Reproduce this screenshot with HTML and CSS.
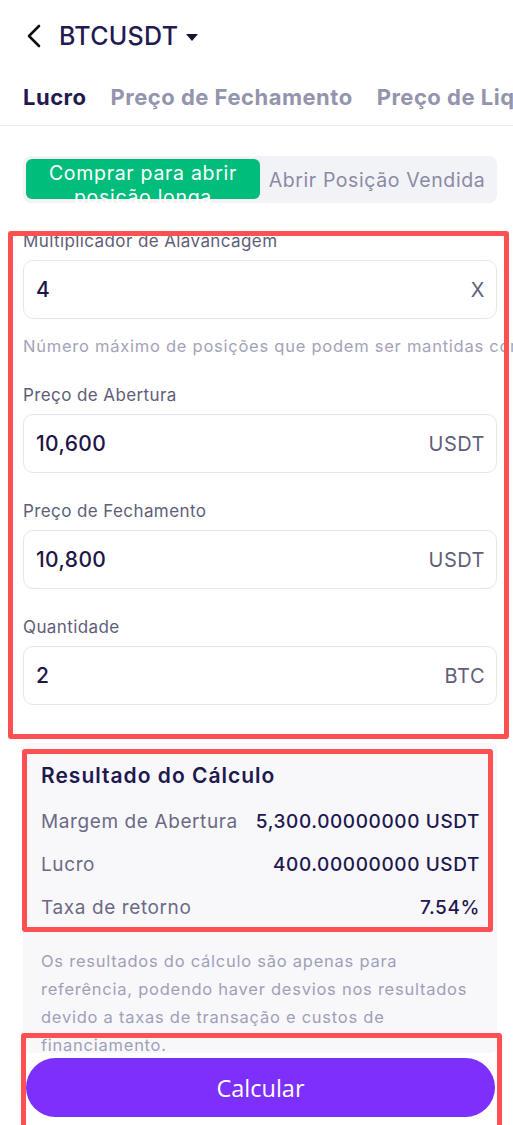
FILE: index.html
```html
<!DOCTYPE html>
<html lang="pt">
<head>
  <meta charset="UTF-8" />
  <meta name="viewport" content="width=device-width, initial-scale=1.0"/>
  <title>Calculadora BTCUSDT</title>
  <link rel="stylesheet" href="styles.css">
</head>
<body>

  <header class="top-bar">
    <svg class="back" width="18" height="24" viewBox="0 0 18 24">
      <polyline points="14,2 4,12 14,22" fill="none" stroke="#111" stroke-width="2.6" stroke-linecap="round" stroke-linejoin="round"/>
    </svg>
    <span class="pair">BTCUSDT</span>
    <svg class="caret" width="12" height="7" viewBox="0 0 12 7">
      <polygon points="0,0 12,0 6,7" fill="#1a1433"/>
    </svg>
  </header>

  <nav class="tabs">
    <span class="tab active">Lucro</span>
    <span class="tab">Preço de Fechamento</span>
    <span class="tab">Preço de Liquidação</span>
  </nav>

  <main class="content">
    <div class="side-toggle">
      <div class="side long">Comprar para abrir posição longa</div>
      <div class="side short">Abrir Posição Vendida</div>
    </div>

    <label class="field-label">Multiplicador de Alavancagem</label>
    <div class="field">
      <span class="value">4</span>
      <span class="unit">X</span>
    </div>
    <p class="hint">Número máximo de posições que podem ser mantidas com a alavancagem atual</p>

    <label class="field-label">Preço de Abertura</label>
    <div class="field">
      <span class="value">10,600</span>
      <span class="unit">USDT</span>
    </div>

    <label class="field-label">Preço de Fechamento</label>
    <div class="field">
      <span class="value">10,800</span>
      <span class="unit">USDT</span>
    </div>

    <label class="field-label">Quantidade</label>
    <div class="field">
      <span class="value">2</span>
      <span class="unit">BTC</span>
    </div>

    <section class="result">
      <h2>Resultado do Cálculo</h2>
      <div class="row"><span>Margem de Abertura</span><strong>5,300.00000000 USDT</strong></div>
      <div class="row"><span>Lucro</span><strong>400.00000000 USDT</strong></div>
      <div class="row"><span>Taxa de retorno</span><strong>7.54%</strong></div>
      <p class="note">Os resultados do cálculo são apenas para referência, podendo haver desvios nos resultados devido a taxas de transação e custos de financiamento.</p>
    </section>

    <button class="calc">Calcular</button>
  </main>

  <div class="mark mark-form"></div>
  <div class="mark mark-result"></div>
  <div class="mark mark-button"></div>

</body>
</html>
```

FILE: styles.css
```css
body {
  margin: 0;
  width: 513px;
  height: 1125px;
  overflow: hidden;
  background: #fff;
  font-family: Inter, 'Noto Sans', sans-serif;
  color: #1e1646;
  position: relative;
}
.top-bar {
  display: flex;
  align-items: center;
  height: 48px;
  padding: 12px 0 0 25px;
}
.back {
  margin-right: 16px;
}
.pair {
  font-size: 25px;
  font-weight: 500;
  color: #231a52;
  letter-spacing: 0.3px;
}
.caret {
  margin-left: 8px;
  margin-top: 2px;
}
.tabs {
  display: flex;
  gap: 24px;
  padding: 0 0 0 23px;
  height: 65px;
  align-items: center;
  white-space: nowrap;
  overflow: hidden;
  border-bottom: 1px solid #ececf1;
  position: relative;
}
.tab {
  font-size: 22px;
  font-weight: 700;
  letter-spacing: 0.5px;
  color: #9394ad;
  position: relative;
  padding-top: 8px;
}
.tab.active {
  color: #23194f;
}
.tab.active::after {
  content: "";
  position: absolute;
  left: 17px;
  width: 29px;
  height: 3px;
  bottom: -20px;
  background: #2a1f5c;
}
.content {
  padding: 0 16px 0 23px;
}
.side-toggle {
  margin-top: 30px;
  display: grid;
  grid-template-columns: 1fr 1fr;
  height: 47px;
  padding: 3px;
  box-sizing: border-box;
  background: #f2f3f7;
  border-radius: 8px;
  overflow: hidden;
}
.side {
  min-width: 0;
  text-align: center;
  font-size: 19.5px;
  letter-spacing: 0.7px;
  line-height: 24px;
}
.long {
  background: #00bd7b;
  color: #fff;
  border-radius: 6px;
  height: 40px;
  padding: 2px 20px 0;
  box-sizing: border-box;
}
.short {
  color: #8a8aa5;
  padding-top: 9px;
  white-space: nowrap;
  letter-spacing: 0.6px;
}
.field-label {
  display: block;
  font-size: 17px;
  letter-spacing: 0.4px;
  line-height: 22px;
  color: #5e5e7a;
  margin: 27px 0 8px;
}
.field {
  display: flex;
  align-items: center;
  justify-content: space-between;
  height: 59px;
  box-sizing: border-box;
  padding: 0 11px 0 12px;
  border: 1px solid #e6e6ee;
  border-radius: 10px;
}
.value {
  font-size: 21px;
  font-weight: 500;
  letter-spacing: 0.4px;
  color: #1e1646;
}
.unit {
  font-size: 20px;
  letter-spacing: 0.5px;
  color: #5f5f7a;
}
.hint {
  margin: 16px -16px 0 0;
  font-size: 16.5px;
  letter-spacing: 0.75px;
  line-height: 22px;
  color: #a3a3b8;
  white-space: nowrap;
  overflow: hidden;
}
.result {
  margin-top: 38px;
  height: 310px;
  overflow: hidden;
  background: #f8f8fb;
  border-radius: 6px;
  padding: 19px 17px 0 18px;
  box-sizing: border-box;
}
.result h2 {
  margin: 0 0 19px;
  font-size: 21px;
  letter-spacing: 1px;
  line-height: 28px;
  font-weight: 600;
  color: #211850;
}
.row {
  display: flex;
  justify-content: space-between;
  font-size: 19px;
  letter-spacing: 0.6px;
  line-height: 26px;
  margin-bottom: 17px;
}
.row span {
  color: #6b6b85;
}
.row strong {
  font-weight: 500;
  color: #211850;
}
.note {
  margin: 26px 0 0;
  font-size: 16.5px;
  letter-spacing: 0.75px;
  line-height: 28px;
  color: #a0a0b8;
}
.calc {
  display: block;
  margin: 5px 0 0 3px;
  width: 469px;
  height: 59px;
  border: none;
  border-radius: 30px;
  background: #7d2ffb;
  color: #fff;
  font-family: 'Open Sans', sans-serif;
  font-size: 23.5px;
}
.mark {
  position: absolute;
  border: 5px solid #fc5052;
  border-radius: 3px;
  box-sizing: border-box;
}
.mark-form {
  left: 8px;
  top: 231px;
  width: 501px;
  height: 508px;
}
.mark-result {
  left: 22px;
  top: 749px;
  width: 471px;
  height: 183px;
}
.mark-button {
  left: 21px;
  top: 1033px;
  width: 481px;
  height: 120px;
}
```
